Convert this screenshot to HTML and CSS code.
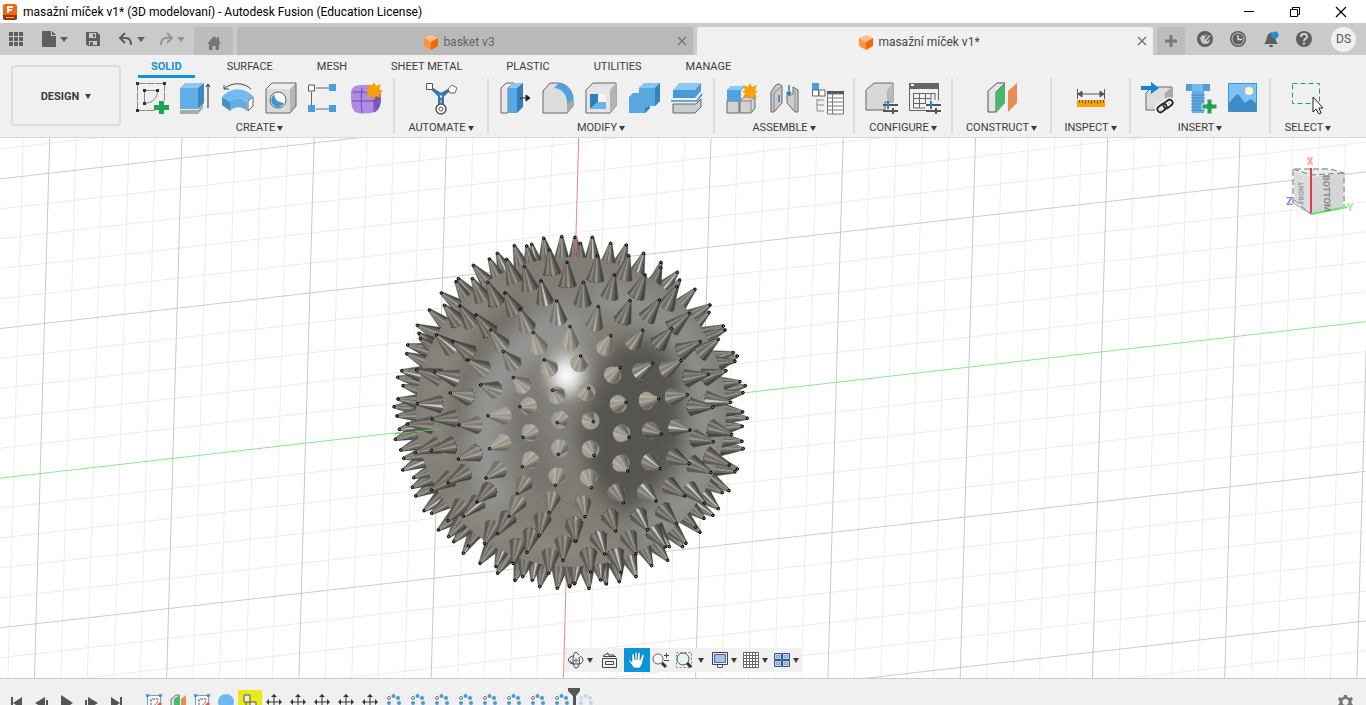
FILE: index.html
```html
<!DOCTYPE html>
<html lang="en">
<head>
<meta charset="utf-8">
<title>masažní míček v1* (3D modelovaní) - Autodesk Fusion (Education License)</title>
<link rel="stylesheet" href="styles.css">
</head>
<body>
<header class="titlebar">
  <svg class="app-logo" viewBox="0 0 16 18" aria-hidden="true"><rect x="1" y="1" width="14" height="16" rx="2" fill="#f0690f"/><path d="M1 12h14v4l-2 1H3l-2-1z" fill="#9c3606"/><path d="M6 10V4h5M6 7h4" stroke="#fff" stroke-width="2" fill="none"/><path d="M4 14.500h8" stroke="#e9b18b"/></svg>
  <h1 class="title">masažní míček v1* (3D modelovaní) - Autodesk Fusion (Education License)</h1>
  <div class="window-buttons">
    <button aria-label="Minimize"><svg viewBox="0 0 12 12"><path d="M1 5.500h10" stroke="#000"/></svg></button>
    <button aria-label="Restore"><svg viewBox="0 0 12 12"><path d="M1.500 3.500h7v7h-7zM3.500 3.500v-2h7v7h-2" fill="none" stroke="#000"/></svg></button>
    <button aria-label="Close"><svg viewBox="0 0 12 12"><path d="M1 1l10 10M11 1L1 11" stroke="#000" stroke-width="1.200"/></svg></button>
  </div>
</header>

<nav class="docbar" aria-label="Documents">
  <div class="quick">
    <button aria-label="Data panel"><svg class="i16" viewBox="0 0 16 16" fill="#5f5f5f"><path d="M1 1h4v4H1zM6 1h4v4H6zM11 1h4v4h-4zM1 6h4v4H1zM6 6h4v4H6zM11 6h4v4h-4zM1 11h4v4H1zM6 11h4v4H6zM11 11h4v4h-4z"/></svg></button>
    <button class="with-caret file" aria-label="File"><svg class="i16" viewBox="0 0 16 16"><path d="M1 0h9v5h5v11H1zM11 0l4 4h-4z" fill="#5f5f5f"/></svg><i class="caret"></i></button>
    <button class="save" aria-label="Save"><svg class="i16" viewBox="0 0 16 16"><path d="M1 1h11l3 3v11H3l-2-2z" fill="#5f5f5f"/><path d="M4 2h7v5H4zM4 10h8v4H4z" fill="#cacaca"/><path d="M8 3h2v3H8zM5 11h3v3H5z" fill="#5f5f5f"/></svg></button>
    <button class="with-caret" aria-label="Undo"><svg class="i16" viewBox="0 0 16 16"><path d="M7 2L2 7l5 5M2 7h6c4 0 5 3 5 7" fill="none" stroke="#5f5f5f" stroke-width="2"/></svg><i class="caret"></i></button>
    <button class="with-caret faint" aria-label="Redo"><svg class="i16" viewBox="0 0 16 16"><path d="M9 2l5 5-5 5M14 7H8c-4 0-5 3-5 7" fill="none" stroke="#5f5f5f" stroke-width="2"/></svg><i class="caret"></i></button>
  </div>
  <button class="home" aria-label="Home"><svg class="i16" viewBox="0 0 16 16"><path d="M8 1l3 3V2h2v4l2 3h-2v6H9.500v-4h-3v4H3V9H1z" fill="#777"/></svg></button>
  <div class="doc">
    <svg class="cube" viewBox="0 0 16 16"><path d="M8 1l7 3-7 4-7-4z" fill="#ffc08a"/><path d="M1 4l7 4v8l-7-4z" fill="#fc9440"/><path d="M15 4L8 8v8l7-4z" fill="#ee6608"/></svg>
    <a href="#basket">basket v3</a>
    <button class="close" aria-label="Close basket v3"><svg viewBox="0 0 10 10"><path d="M1 1l8 8M9 1L1 9" stroke="#777" stroke-width="1.500"/></svg></button>
  </div>
  <div class="doc active">
    <svg class="cube" viewBox="0 0 16 16"><path d="M8 1l7 3-7 4-7-4z" fill="#ffc08a"/><path d="M1 4l7 4v8l-7-4z" fill="#fc9440"/><path d="M15 4L8 8v8l7-4z" fill="#ee6608"/></svg>
    <a href="#micek">masažní míček v1*</a>
    <button class="close" aria-label="Close masažní míček"><svg viewBox="0 0 10 10"><path d="M1 1l8 8M9 1L1 9" stroke="#777" stroke-width="1.500"/></svg></button>
  </div>
  <button class="new" aria-label="New design"><svg viewBox="0 0 14 14"><path d="M7 1v12M1 7h12" stroke="#777" stroke-width="3"/></svg></button>
  <div class="account">
    <button aria-label="Extensions"><svg viewBox="0 0 18 18"><circle cx="9" cy="9" r="8" fill="#5f5f5f"/><path d="M4 8c1-2 2-3 4-3l1 2 1-3 2 2 3-1-2 3 1 1c0 3-2 5-5 5-2 0-4-1-4-3z" fill="#cacaca"/><path d="M9 9l4-5M11 11l4-4" stroke="#5f5f5f" stroke-width="1.500"/></svg></button>
    <button aria-label="Job status"><svg viewBox="0 0 18 18"><circle cx="9" cy="9" r="8" fill="#5f5f5f"/><circle cx="9" cy="9" r="6" fill="none" stroke="#cacaca"/><path d="M9 5v4.500h4" fill="none" stroke="#d8d8d8" stroke-width="1.500"/></svg></button>
    <button aria-label="Notifications"><svg viewBox="0 0 18 18"><path d="M2 14c3-2 2-9 5-10 1-2 3-2 4 0 3 1 2 8 5 10zM7 15h4c0 3-4 3-4 0z" fill="#5f5f5f"/><circle cx="13" cy="5" r="3.500" fill="#1a93d5"/></svg></button>
    <button aria-label="Help"><svg viewBox="0 0 18 18"><circle cx="9" cy="9" r="8" fill="#5f5f5f"/><path d="M6 7c0-4 6-4 6-.5 0 2.500-3 2-3 4.500M9 12.500v2" fill="none" stroke="#d8d8d8" stroke-width="2"/></svg></button>
    <button class="avatar">DS</button>
  </div>
</nav>

<section class="ribbon">
  <button class="workspace">DESIGN <i class="caret"></i></button>
  <div class="ribbon-main">
    <nav class="tabs" aria-label="Toolbar tabs">
      <a class="on" href="#solid">SOLID</a><a href="#surface">SURFACE</a><a href="#mesh">MESH</a><a href="#sheet">SHEET METAL</a><a href="#plastic">PLASTIC</a><a href="#utilities">UTILITIES</a><a href="#manage">MANAGE</a>
    </nav>
    <div class="groups">
      <div class="group create">
        <div class="tools">
          <button aria-label="Create sketch"><svg viewBox="0 0 34 34"><path d="M2.500 2.500h27v17M2.500 2.500v27h18" fill="none" stroke="#888" stroke-dasharray="8 1"/><path d="M22 9.500H9.500V23M22.500 10c0 7-5 12-13 12.500" fill="none" stroke="#888"/><path d="M1 1h3v3H1zM28 1h3v3h-3zM1 28h3v3H1zM8 8h3v3H8zM21 8h3v3h-3zM8 21h3v3H8z" fill="#333"/><path d="M24 20h5v4h5v5h-5v4h-5v-4h-5v-5h5z" fill="#22a353"/></svg></button>
          <button aria-label="Extrude"><svg viewBox="0 0 34 34"><path d="M2 29h18l5-6v4l-5 6H2z" fill="#aaa"/><path d="M2 7l5-5h19l-5 5z" fill="#8ccaf2"/><path d="M2 7h18v21H2z" fill="#63aee4"/><path d="M20 7l6-5v20l-6 6z" fill="#3d88c0"/><path d="M30 27V4M28 6l2-3 2 3" fill="none" stroke="#222"/></svg></button>
          <button aria-label="Revolve"><svg viewBox="0 0 34 34"><path d="M3 8C10 1 23 1 30 8M3 4v4h5" fill="none" stroke="#444"/><path d="M1 16c9-10 22-10 31-1l-5 6c-6-5-13-5-18 0z" fill="#74bced"/><path d="M1 16l8 5v9l-8-6z" fill="#4591c9"/><path d="M9 21c5-5 12-5 17 0v9c-5-5-12-5-17 0z" fill="#61aee3"/><path d="M27 20l5-4v9l-5 5z" fill="#fff" stroke="#666"/></svg></button>
          <button aria-label="Hole"><svg viewBox="0 0 34 34"><path d="M2 8l6-6h24l-6 6z" fill="#eee"/><path d="M26 8l6-6v23l-6 7z" fill="#b5b5b5"/><path d="M2 8h24v24H2z" fill="#d9d9d9"/><path d="M2 32V8l6-6h24v23l-6 7z" fill="none" stroke="#666"/><circle cx="14" cy="19" r="8" fill="#fff" stroke="#666"/><path d="M10 13c1 6 4 8 10 9-2 5-8 5-11 2-3-4-2-8 1-11z" fill="#4096d4"/></svg></button>
          <button aria-label="Pattern"><svg viewBox="0 0 34 34"><path d="M9 7h13M9 28h13M4.500 11v13" stroke="#666" fill="none"/><path d="M1.500 4h6v6h-6z" fill="#fff" stroke="#555"/><path d="M22 3h7v7h-7zM1 24h7v7H1zM22 24h7v7h-7z" fill="#4d9fdc"/></svg></button>
          <button aria-label="Create form"><svg viewBox="0 0 34 34"><path d="M1 13c0-7 4-9 11-9h12c5 2 7 5 7 10 0 6 0 14-6 17-7 2-14 2-20 0-4-4-4-11-4-18z" fill="#b08ce6"/><path d="M24 10l7 4c0 6 0 13-6 17z" fill="#7d58b8"/><path d="M12 7c-1 8-1 16 0 25M2 20h22l7-4M24 9v22M3 11h20" fill="none" stroke="#6c49a6"/><path d="M24 1l2 4 5-2-2 5 4 2-4 2 2 5-5-2-2 4-2-4-5 2 2-5-4-2 4-2-2-5 5 2z" fill="#f8a100"/></svg></button>
        </div>
        <button class="menu">CREATE <i class="caret"></i></button>
      </div>
      <div class="group automate">
        <div class="tools"><button aria-label="Automated modeling"><svg viewBox="0 0 34 34"><path d="M6 6l9 9v10h4V15l9-8-11 6z" fill="#6aaee0" stroke="#3577ad" stroke-width="2"/><path d="M15 14h4l-2 5z" fill="#fff" stroke="#3577ad"/><path d="M2.500 2.500h6v6h-6z" fill="#fff" stroke="#555"/><path d="M28 4l5 3-2 5h-5l-2-4z" fill="#fff" stroke="#666"/><circle cx="17" cy="28" r="5" fill="#fff" stroke="#555" stroke-width="1.500"/><circle cx="17" cy="28" r="2" fill="none" stroke="#555"/></svg></button></div>
        <button class="menu">AUTOMATE <i class="caret"></i></button>
      </div>
      <div class="group modify">
        <div class="tools">
          <button aria-label="Press pull"><svg viewBox="0 0 34 34"><path d="M3 7l5-5h8L10 7v25H3z" fill="#e8e8e8" stroke="#666"/><path d="M10 7l5-5h10l-5 5z" fill="#8ccaf2"/><path d="M10 7h9v25h-9z" fill="#58a8e2"/><path d="M19 7l6-5v24l-6 6z" fill="#357fb7"/><path d="M22 17h9M28 14l4 3-4 3z" stroke="#222" fill="#222"/></svg></button>
          <button aria-label="Fillet"><svg viewBox="0 0 34 34"><path d="M2 32V10l7-8h7c10 0 16 8 16 17v6l-6 7z" fill="#ddd" stroke="#666"/><path d="M26 21l6-2v6l-6 7z" fill="#aaa"/><path d="M13 7l5-5c9 1 14 8 14 17l-6 3C26 14 22 8 13 7z" fill="#4fa3df"/></svg></button>
          <button aria-label="Shell"><svg viewBox="0 0 34 34"><path d="M2 9l7-7h23v23l-6 7H2z" fill="#e5e5e5" stroke="#666"/><path d="M26 9l6-7v23l-6 7z" fill="#b3b3b3"/><path d="M6 13h16v15H6z" fill="#fff"/><path d="M6 13h8v8l-8 7z" fill="#2d7fbd"/><path d="M6 28l8-7h8v7z" fill="#67b3e8"/><path d="M14 13h8v8h-8z" fill="#f4f4f4"/></svg></button>
          <button aria-label="Combine"><svg viewBox="0 0 34 34"><path d="M2 16l4-4h6V7l5-5h16v18l-5 5h-5v2l-5 5H2z" fill="#58a7e0"/><path d="M12 7l5-5h16l-5 5z" fill="#84c5f1"/><path d="M28 7l5-5v18l-5 5zM18 27v5l5-5v-2z" fill="#3682bc"/></svg></button>
          <button aria-label="Split body"><svg viewBox="0 0 34 34"><path d="M3 9l6-7h22l-5 7z" fill="#8ccaf2"/><path d="M3 9h22v8H3zM25 9l6-7v8l-6 7z" fill="#4b9ad5"/><path d="M1 20h26l5-7" fill="none" stroke="#3990d0" stroke-width="1.500"/><path d="M3 23h23l5-5v8l-6 6H3z" fill="#ccc" stroke="#666"/></svg></button>
        </div>
        <button class="menu">MODIFY <i class="caret"></i></button>
      </div>
      <div class="group assemble">
        <div class="tools">
          <button aria-label="New component"><svg viewBox="0 0 34 34"><path d="M3 20h12v12H3zM16 20l4-4h11v11l-4 5H16z" fill="#d2d2d2" stroke="#666"/><path d="M3 9l4-4h14l-4 5v10H3z" fill="#4fa2df"/><path d="M3 9l4-4h14l-4 4z" fill="#8ac9f2"/><path d="M16 20h11v12M27 20l4-4" stroke="#888" fill="none"/><path d="M26 2l2 4 5-2-2 5 3 2-3 1 2 5-5-2-2 4-2-4-5 2 2-5-3-1 3-2-2-5 5 2z" fill="#f8a100"/></svg></button>
          <button aria-label="Joint"><svg viewBox="0 0 34 34"><path d="M4 11l4-6c2-3 7-2 7 1v16l-8 9H4z" fill="#c9c9c9" stroke="#666"/><path d="M7 31V12l8-7" fill="none" stroke="#888"/><path d="M31 9l-5-3v7c-2 2-5 1-6-1v10l8 9h3z" fill="#ccc" stroke="#666"/><path d="M28 9v21" stroke="#888"/><path d="M22 4v10M20 11l2 3 2-3M12 14v7" fill="none" stroke="#287db8" stroke-width="1.500"/></svg></button>
          <button aria-label="Bill of materials"><svg viewBox="0 0 34 34"><path d="M2 2h7v7H2z" fill="#4b9fdd"/><path d="M2.500 9h6v6h-6zM9 9h6v6H9z" fill="#fff" stroke="#666"/><path d="M7 18v12h7M7 19h7M7 24h7" stroke="#888" fill="none"/><path d="M17 10h17v4H17z" fill="#555"/><path d="M17.500 13h16v20h-16z" fill="#fff"/><path d="M17.500 13h16v20h-16zM17 17h17M17 21h17M17 25h17M17 29h17M22.500 13v20" fill="none" stroke="#777"/></svg></button>
        </div>
        <button class="menu">ASSEMBLE <i class="caret"></i></button>
      </div>
      <div class="group configure">
        <div class="tools">
          <button aria-label="Configure part"><svg viewBox="0 0 34 34"><path d="M1 9l8-7h19v19H20v8H1z" fill="#d8d8d8" stroke="#666"/><path d="M22 9l6-7v19h-6z" fill="#b9b9b9"/><path d="M18 24h15M18 30h15" stroke="#555" stroke-width="2"/><path d="M23 20v8" stroke="#2382c5" stroke-width="2"/><path d="M28 27v6" stroke="#555" stroke-width="2"/></svg></button>
          <button aria-label="Configuration table"><svg viewBox="0 0 34 34"><path d="M1 2h30v6H1z" fill="#666"/><path d="M1.500 2.500h29v17M1.500 2.500v27h17M5 12.500h22M5 17.500h18M5 22.500h12M5 27h12M5.500 12v15M11.500 12v15M17.500 12v11M23 12v7M27 12v7" fill="none" stroke="#666"/><path d="M18 24h15M18 30h15" stroke="#555" stroke-width="2"/><path d="M23 20v8" stroke="#2382c5" stroke-width="2"/><path d="M28 27v6" stroke="#555" stroke-width="2"/><path d="M3 4h3" stroke="#fff" stroke-width="2"/></svg></button>
        </div>
        <button class="menu">CONFIGURE <i class="caret"></i></button>
      </div>
      <div class="group construct">
        <div class="tools"><button aria-label="Offset plane"><svg viewBox="0 0 34 34"><path d="M3 10l9-8h8l-9 9v20H3z" fill="#e4e4e4" stroke="#555"/><path d="M11 11l9-9v20l-9 10z" fill="#4ab86c"/><path d="M23 10l9-8v20l-9 9z" fill="#e58b55"/></svg></button></div>
        <button class="menu">CONSTRUCT <i class="caret"></i></button>
      </div>
      <div class="group inspect">
        <div class="tools"><button aria-label="Measure"><svg viewBox="0 0 34 34"><path d="M3.500 8v10M30.500 8v10M4 13h26M8 10l-4 3 4 3zM26 10l4 3-4 3z" fill="#555" stroke="#555"/><path d="M3 19h28v7H3z" fill="#f7a400"/><path d="M5.500 19v3M8.500 19v3M11.500 19v4M14.500 19v3M17.500 19v4M20.500 19v3M23.500 19v4M26.500 19v3M29.500 19v3" stroke="#805500"/></svg></button></div>
        <button class="menu">INSPECT <i class="caret"></i></button>
      </div>
      <div class="group insert">
        <div class="tools">
          <button aria-label="Insert derive"><svg viewBox="0 0 34 34"><path d="M6 12l6-6h20v17l-7 6H6z" fill="#ddd" stroke="#666"/><path d="M25 12l7-6v17l-7 6z" fill="#aaa"/><path d="M1 5h10V1l8 6-8 6V9H1z" fill="#1684d2"/><g fill="none" stroke="#fff" stroke-width="5"><rect x="17" y="24" width="10" height="6" rx="3" transform="rotate(-38 22 27)"/><rect x="23" y="20" width="10" height="6" rx="3" transform="rotate(-38 28 23)"/></g><g fill="none" stroke="#333" stroke-width="2"><rect x="17" y="24" width="10" height="6" rx="3" transform="rotate(-38 22 27)"/><rect x="23" y="20" width="10" height="6" rx="3" transform="rotate(-38 28 23)"/></g></svg></button>
          <button aria-label="Insert fastener"><svg viewBox="0 0 34 34"><path d="M3 3h24v7H3z" fill="#4f9fd8"/><path d="M9 3h11v7H9z" fill="#78bbea"/><path d="M9 10h12v22H9z" fill="#69aee0"/><path d="M8 14h14M8 17h14M8 20h14M8 23h14M8 26h14M8 29h14" stroke="#3e88be"/><path d="M24 18h5v5h5v5h-5v5h-5v-5h-5v-5h5z" fill="#22a353" stroke="#f0f0f0"/></svg></button>
          <button aria-label="Insert image"><svg viewBox="0 0 34 34"><path d="M2 2h29v29H2z" fill="#7ec2f4"/><circle cx="23" cy="10" r="4" fill="#fff9cd"/><path d="M2 23l8-9c1-1 2-1 3 0l6 8 4-3c1-1 2-1 3 0l5 4v8H2z" fill="#3b8cc7"/><path d="M2.500 2.500h28v28h-28z" fill="none" stroke="#4492ca"/></svg></button>
        </div>
        <button class="menu">INSERT <i class="caret"></i></button>
      </div>
      <div class="group select">
        <div class="tools"><button aria-label="Select"><svg viewBox="0 0 34 34"><path d="M1.500 2.500h27v20h-27z" fill="none" stroke="#22a353" stroke-dasharray="5 3"/><path d="M22 16v15l3-3 3 5 2-1-2-5h4z" fill="#fff" stroke="#222"/></svg></button></div>
        <button class="menu">SELECT <i class="caret"></i></button>
      </div>
    </div>
  </div>
</section>

<main class="viewport">
  <svg id="scene" class="scene" viewBox="0 138 1366 540" preserveAspectRatio="xMidYMid slice" role="img" aria-label="Spiked massage ball on a grid">
    <defs>
      <clipPath id="body"><circle cx="571" cy="412" r="155"/></clipPath>
      <filter id="soft" x="-50%" y="-50%" width="200%" height="200%"><feGaussianBlur stdDeviation="10"/></filter>
      <filter id="glow" x="-50%" y="-50%" width="200%" height="200%"><feGaussianBlur stdDeviation="7"/></filter>
    </defs>
    <g id="grid"></g>
    <g id="back"></g>
    <g clip-path="url(#body)">
      <circle cx="571" cy="412" r="156" fill="#807d76"/>
      <g filter="url(#soft)">
        <path d="M440 470Q420 350 500 285" fill="none" stroke="#8b877e" stroke-width="20"/>
        <path d="M460 440Q448 370 520 305" fill="none" stroke="#6b685f" stroke-width="14"/>
        <path d="M500 510C470 430 478 370 560 320" fill="none" stroke="#959696" stroke-width="30"/>
        <path d="M590 300C660 290 700 350 705 420C706 480 680 520 640 540" fill="none" stroke="#8d918c" stroke-width="32"/>
        <path d="M610 350Q655 320 684 368V450Q665 490 625 515Q590 500 578 430Z" fill="#575550"/>
        <path d="M520 400Q528 450 550 490" fill="none" stroke="#6d6c68" stroke-width="16"/>
        <path d="M552 400Q556 440 566 465" fill="none" stroke="#828280" stroke-width="14"/>
        <ellipse cx="565" cy="335" rx="24" ry="32" fill="#929391"/>
        <path d="M450 500Q520 560 620 548" fill="none" stroke="#8f8b80" stroke-width="16"/>
      </g>
      <g filter="url(#glow)"><ellipse cx="566" cy="374" rx="20" ry="26" fill="#b4b4b4"/><circle cx="567" cy="375" r="13" fill="#fff"/></g>
    </g>
    <path d="M577 236L575 262" stroke="#d66" fill="none"/>
    <g id="front"></g>
    <path d="M394 434L440 429" stroke="#66bf5e" fill="none"/>
  </svg>

  <svg class="viewcube" viewBox="0 0 72 66" role="img" aria-label="View cube">
    <path d="M10 17l18 6v38L10 46z" fill="#dcdcdc"/><path d="M28 21l32-2-1 36-31 6z" fill="#d4d5d6"/><path d="M10 17l29-3 21 5-32 4z" fill="#ececec"/>
    <path d="M9 49V15h37l14 4v33M9 15l18 6 33-2M10 46l18 15" fill="none" stroke="#777" stroke-dasharray="6 3"/>
    <path d="M27 14v46" stroke="#e33c3c" stroke-width="2"/><path d="M27 60l36-7" stroke="#62ec62" stroke-width="2"/><path d="M27 60L8 48" stroke="#8887e8"/>
    <text x="23" y="11" fill="#f99" font-size="10">X</text><text x="2" y="51" fill="#8b85ee" font-size="11">Z</text><text x="63" y="57" fill="#8eed8e" font-size="10">Y</text>
    <text transform="translate(39 21) rotate(88)" font-size="9" fill="#888">BOTTOM</text><text transform="translate(20 50) rotate(-92)" font-size="7" fill="#999">FRONT</text>
  </svg>

  <div class="navbar">
    <button class="wide" aria-label="Orbit"><svg viewBox="0 0 18 18"><path d="M6 5C0 6 0 12 6 13l6 0c5-1 5-6 1-8M9 1C5 1 5 17 9 17c3 0 4-5 3-11M9 1l3 3M6 13l-3-3" fill="none" stroke="#444"/><path d="M9 7v5M6.500 9.500h5" stroke="#1688cd"/></svg><i class="caret"></i></button>
    <button class="look" aria-label="Look at"><svg viewBox="0 0 18 18"><path d="M1.500 7.500h14v9h-14zM4.500 10.500h8v3h-8zM2 5.500h13M2 5l5-3v2h6v2" fill="none" stroke="#444"/></svg></button>
    <button class="pan" aria-label="Pan"><svg viewBox="0 0 18 18"><path d="M6 17L1 10c0-1 1-2 3 1L4 4c0-2 2-1 2 0l1 5V2c0-1 2-1 2 0v7l1-7c1-1 2-1 2 0v7l2-5c1-1 2 0 2 1l-2 8-2 4z" fill="#fff" stroke="#155b82" stroke-width=".5"/></svg></button>
    <button class="look" aria-label="Zoom"><svg viewBox="0 0 18 18"><circle cx="6" cy="8" r="5" fill="#f8f8f8" stroke="#666"/><path d="M10 12l4 4" stroke="#333" stroke-width="3"/><path d="M12 4.500h5M14.500 2v5M12 9.500h5" stroke="#444"/></svg></button>
    <button class="wide fit" aria-label="Fit"><svg viewBox="0 0 18 18"><path d="M1.500 1.500h15v15h-15z" fill="none" stroke="#777" stroke-dasharray="2 2"/><circle cx="8" cy="8" r="6" fill="#e5f4f4" stroke="#555"/><path d="M12 12l4 4" stroke="#333" stroke-width="3"/></svg><i class="caret"></i></button>
    <button class="wide" aria-label="Display settings"><svg viewBox="0 0 18 18"><path d="M1.500 1.500h15v12h-15z" fill="#eee" stroke="#444"/><path d="M3.500 3.500h11v8h-11z" fill="#a9c1ea" stroke="#4d6998"/><path d="M6.500 14v2.500h5V14" fill="none" stroke="#555"/></svg><i class="caret"></i></button>
    <button class="wide" aria-label="Grid settings"><svg viewBox="0 0 18 18"><path d="M1.500 1.500h15v15h-15zM4.500 1v16M7.500 1v16M10.500 1v16M13.500 1v16M1 4.500h16M1 7.500h16M1 10.500h16M1 13.500h16" fill="#fff" stroke="#666"/></svg><i class="caret"></i></button>
    <button class="wide" aria-label="Viewports"><svg viewBox="0 0 18 18"><path d="M1.500 2.500h7v6h-7zM9.500 2.500h7v6h-7zM1.500 9.500h7v6h-7zM9.500 9.500h7v6h-7z" fill="#b9d0f2" stroke="#3a5480"/><path d="M3.500 4.500h3v2h-3zM11.500 4.500h3v2h-3zM3.500 11.500h3v2h-3zM11.500 11.500h3v2h-3z" fill="none" stroke="#86a4d4"/></svg><i class="caret"></i></button>
  </div>
</main>

<footer class="timeline">
  <div class="playback">
    <button aria-label="Go to start"><svg viewBox="0 0 16 16"><path d="M3 3h2v12H3zM14 3v12L5 9z" fill="#555"/></svg></button>
    <button aria-label="Step back"><svg viewBox="0 0 16 16"><path d="M12 3v12L2 9zM13 6h2v9h-2z" fill="#555"/></svg></button>
    <button aria-label="Play"><svg viewBox="0 0 16 16"><path d="M3 1l12 8-12 8z" fill="#555"/></svg></button>
    <button aria-label="Step forward"><svg viewBox="0 0 16 16"><path d="M5 3v12l10-6zM2 6h2v9H2z" fill="#555"/></svg></button>
    <button aria-label="Go to end"><svg viewBox="0 0 16 16"><path d="M12 3h2v12h-2zM3 3v12l9-6z" fill="#555"/></svg></button>
  </div>
  <div id="features" class="features"></div>
  <button class="settings" aria-label="Timeline settings"><svg viewBox="0 0 16 16"><path d="M7 1h3l.5 2 2 1 2-1 1.500 2-1.500 2v2l1.500 2-1.500 2-2-1-2 1-.5 2H7l-.5-2-2-1-2 1L1 11l1.500-2V7L1 5l1.500-2 2 1 2-1z" fill="#777"/><circle cx="8.500" cy="8" r="3" fill="#f0f0f0"/></svg></button>
</footer>
<script src="scene.js"></script>
</body>
</html>
```
FILE: styles.css
```css
* { box-sizing: border-box; }
body { margin: 0; height: 100vh; display: flex; flex-direction: column; overflow: hidden; background: #f0f0f0; color: #3c3c3c; font: 11px/14px Roboto, "Noto Sans", sans-serif; }
button { margin: 0; padding: 0; border: 0; background: none; color: inherit; font: inherit; display: flex; align-items: center; justify-content: center; }
a { color: inherit; text-decoration: none; }
svg { display: block; flex: none; }
.caret { display: inline-block; flex: none; border: 3px solid transparent; border-top: 5px solid #3c3c3c; border-bottom: 0; }

.titlebar { flex: none; height: 23px; display: flex; align-items: center; background: #fff; color: #000; padding-left: 2px; }
.app-logo { width: 16px; height: 18px; margin-right: 5px; }
.title { flex: 1; margin: 0; font: 12px/16px Roboto, "Noto Sans", sans-serif; }
.window-buttons { display: flex; padding-right: 2px; }
.window-buttons button { width: 46px; height: 20px; }
.window-buttons svg { width: 12px; height: 12px; }

.docbar { flex: none; height: 32px; display: flex; align-items: flex-end; gap: 4px; background: #cacaca; }
.quick { width: 190px; height: 32px; display: flex; align-items: center; padding-left: 8px; gap: 17px; }
.quick .caret { border-top-color: #5f5f5f; border-left-width: 4px; border-right-width: 4px; }
.i16 { width: 16px; height: 16px; }
.with-caret { gap: 3px; }
.quick .with-caret + .with-caret { margin-left: -4px; }
.faint { opacity: .5; }
.home { width: 39px; height: 28px; padding-top: 4px; background: #bcbcbc; border-radius: 3px 3px 0 0; }
.doc { flex: 1; height: 28px; display: flex; align-items: center; justify-content: center; gap: 4px; position: relative; padding: 2px 12px 0 0; background: #b9b9b9; color: #666; border-radius: 3px 3px 0 0; font-size: 12px; }
.doc.active { background: #f0f0f0; color: #444; }
.cube { width: 16px; height: 16px; }
.close { position: absolute; right: 6px; top: 9px; }
.close svg { width: 10px; height: 10px; }
.new { width: 28px; height: 28px; background: #bcbcbc; border-radius: 3px 3px 0 0; }
.new svg { width: 14px; height: 14px; }
.account { height: 32px; display: flex; align-items: center; gap: 15px; padding: 0 10px 0 7px; }
.account svg { width: 18px; height: 18px; }
.avatar { width: 25px; height: 25px; margin-left: 3px; border-radius: 50%; background: #f0f0f0; font-size: 12px; color: #555; }

.ribbon { flex: none; height: 83px; display: flex; background: #f0f0f0; border-bottom: 1px solid #d8d8d8; }
.workspace { width: 110px; height: 61px; margin: 10px 5px 0 11px; padding-top: 2px; gap: 6px; border: 2px solid #dcdcdc; border-radius: 4px; font-weight: 700; }
.ribbon-main { flex: 1; min-width: 0; }
.tabs { display: flex; gap: 18px; height: 23px; padding-left: 12px; }
.tabs a { padding: 5px 13px 1px; border-bottom: 3px solid transparent; white-space: nowrap; }
.tabs .on { color: #1592d2; border-color: #1592d2; font-weight: 700; margin-right: 1px; }
.groups { display: flex; }
.group { display: flex; flex-direction: column; align-items: center; height: 56px; padding-top: 3px; border-right: 2px solid #dcdcdc; }
.tools { display: flex; gap: 9px; }
.tools svg { width: 34px; height: 34px; }
.menu { gap: 2px; height: 14px; margin-top: 6px; white-space: nowrap; }
.create { width: 269px; }
.automate { width: 94px; }
.modify { width: 226px; }
.assemble { width: 140px; }
.configure { width: 98px; }
.construct { width: 99px; }
.inspect { width: 79px; }
.insert { width: 140px; }
.select { width: 74px; border-right: 0; }

.viewport { flex: 1; min-height: 0; position: relative; background: #fff; }
.scene { width: 100%; height: 100%; }
.viewcube { position: absolute; right: 10px; top: 16px; width: 72px; height: 66px; font-family: Roboto, sans-serif; font-weight: 700; }
.navbar { position: absolute; bottom: 6px; left: 0; right: 0; width: 236px; height: 24px; margin: 0 auto; display: flex; background: #f0f0f0; }
.navbar button { height: 24px; }
.navbar svg { width: 18px; height: 18px; }
.wide { width: 31px; gap: 2px; }
.fit { width: 37px; gap: 5px; }
.look { width: 22px; }
.navbar .look:nth-child(2) { width: 28px; }
.pan { width: 26px; background: #0a96d8; }

.timeline { flex: none; height: 27px; display: flex; align-items: flex-start; padding-top: 15px; overflow: hidden; border-top: 1px solid #ccc; }
.timeline svg { width: 16px; height: 16px; }
.playback { display: flex; gap: 9px; padding-left: 8px; width: 142px; }
.features { display: flex; flex: 1; }
.features button { width: 24px; height: 24px; margin-top: -4px; }
.features .hot { background: #e6ea18; }
.features .marker { width: 12px; margin: -6px -6px 0; z-index: 1; }
.features .marker svg { width: 12px; height: 24px; }
.features .later { opacity: .3; }
.settings { margin-right: 13px; }
```
FILE: scene.js
```js
const NS = 'http://www.w3.org/2000/svg';
function add(parent, tag, attrs) {
  const el = document.createElementNS(NS, tag);
  for (const k in attrs) el.setAttribute(k, attrs[k]);
  parent.appendChild(el);
  return el;
}

// Ground grid: every fifth line is a major one.
const grid = document.getElementById('grid');
function gridLine(x1, y1, x2, y2, color) {
  add(grid, 'path', { d: `M${x1} ${y1}L${x2} ${y2}`, stroke: color, fill: 'none' });
}
for (const major of [false, true]) {
  for (let i = -10; i < 60; i++) {
    if ((i % 5 === 0) !== major) continue;
    const x = 49.7 + 26.45 * i;
    gridLine(x, 138, x - 15.3, 678, i === 20 ? '#e98787' : major ? '#c9c9c9' : '#ededed');
  }
  for (let i = -6; i < 24; i++) {
    if ((i % 5 === 0) !== major) continue;
    const y = 178.9 + 29.93 * i;
    gridLine(0, y, 1366, y - 156.6, i === 10 ? '#8ee58e' : major ? '#cccccc' : '#ececec');
  }
}

// Spikes per quadrant: tip x, tip y, base x, base y, at three units per pixel.
const quadrants = [
  [380, 220, `491,55,500,115 545,50,545,120 585,52,590,110 403,77,425,140 440,78,455,140 455,73,470,142 508,90,517,160 352,100,375,150 328,117,358,180 380,118,405,185 433,140,450,207 561,127,563,197 483,183,495,245 530,243,535,300 280,136,325,190 277,176,310,238 323,187,350,248 375,219,405,275 228,185,265,248 235,176,278,232 184,219,245,265 193,256,235,305 240,258,275,310 288,285,330,335 420,269,442,322 148,270,205,320 112,316,180,345 117,340,150,370 121,356,175,395 169,345,215,385 219,365,270,400 332,330,365,375 460,338,478,383 570,320,571,370 83,375,150,392 80,401,148,430 264,420,312,448 370,395,400,432 493,420,508,445 65,452,120,462 110,450,180,472 164,457,230,475 53,472,130,485 69,497,142,515 302,495,345,510 400,473,430,495 518,511,530,525 211,519,265,530 54,537,120,545 42,560,110,562 112,551,180,552 420,560,445,558`],
  [560, 220, `61,70,62,140 97,52,97,118 112,108,106,180 152,70,143,135 199,75,180,135 206,107,190,175 251,100,230,160 163,165,148,232 70,187,68,250 255,165,228,228 303,127,280,205 302,143,270,205 352,157,310,205 359,180,325,230 350,200,318,260 405,208,350,265 115,260,103,318 210,242,188,300 298,240,260,295 450,255,395,290 388,280,335,325 447,277,390,330 152,347,135,385 248,331,220,370 335,326,295,372 490,318,425,345 495,330,420,360 421,365,362,395 475,358,420,400 62,408,58,430 180,443,158,465 277,430,240,455 363,422,318,450 520,398,452,415 532,408,470,435 525,424,455,430 445,463,380,475 498,452,435,472 540,485,470,492 556,497,480,512 549,518,480,528 86,505,80,517 198,547,175,552 296,537,260,542 382,524,335,532 512,547,440,540 458,562,395,560`],
  [380, 400, `51,48,120,42 58,88,120,75 82,72,155,75 157,58,225,55 237,75,290,75 324,47,375,48 532,68,540,60 46,118,110,95 62,150,130,125 106,158,175,135 154,151,218,135 71,175,140,160 68,210,130,180 429,112,450,98 329,146,372,128 235,177,290,158 535,163,540,145 427,200,452,180 318,234,358,208 101,233,168,205 97,262,150,235 107,288,165,255 154,270,212,235 204,248,258,215 526,256,532,228 412,281,432,250 291,306,328,270 132,332,180,295 155,340,210,300 250,349,295,305 204,362,245,315 388,349,415,305 508,338,515,295 175,390,225,350 353,401,385,352 478,406,488,355 206,410,240,370 221,425,265,378 250,460,290,390 265,438,300,385 314,431,340,378 441,457,455,400 586,424,583,370 549,481,550,422 300,490,335,440 348,500,370,440 353,520,380,470 399,490,415,430 405,541,425,485 428,530,435,485 457,541,465,480 479,560,490,505 506,520,512,460 532,565,538,505 569,560,578,490 583,550,590,490`],
  [560, 400, `100,65,92,62 207,112,185,100 304,102,270,92 390,90,345,82 460,125,405,115 515,103,455,85 548,36,480,30 562,55,490,48 547,79,490,82 546,124,480,120 550,146,485,143 102,166,92,148 203,213,183,190 300,206,268,185 387,191,340,170 453,217,395,190 508,195,440,165 532,207,455,180 525,215,465,205 94,263,86,232 190,308,168,275 288,303,255,272 374,288,325,255 433,309,385,265 487,278,430,245 507,272,440,230 475,326,435,290 459,346,400,310 432,355,390,320 75,350,68,310 167,393,150,350 262,389,235,345 349,371,308,330 420,397,365,345 407,382,360,335 378,430,335,385 368,440,325,390 316,441,280,395 328,440,285,385 47,423,42,378 134,462,115,412 228,461,205,408 323,481,285,435 275,497,250,440 228,530,208,475 92,516,85,460 183,517,165,460 44,551,40,490 28,558,30,500 87,565,80,505 139,552,125,495 122,540,115,490 178,545,170,495`]
];
const spikes = [];
for (const [ox, oy, list] of quadrants) {
  for (const item of list.split(' ')) {
    const [a, b, c, d] = item.split(',').map(Number);
    const s = { tx: ox + a / 3, ty: oy + b / 3, bx: ox + c / 3, by: oy + d / 3 };
    s.r = Math.hypot(s.tx - 571, s.ty - 413);
    spikes.push(s);
  }
}
spikes.sort((p, q) => q.r - p.r);

const tones = {
  outer: ['#5c5a54', '#85837c', '#6d6b64', '#94928b', '#66645e', '#474641'],
  middle: ['#75736b', '#96948c', '#7f7d75', '#a5a39b', '#716f68', '#504e49'],
  inner: ['#a5a297', '#b3b0a5', '#9a978d', '#a8a59a', '#86837a', '#6c6a62']
};
spikes.forEach((s, n) => {
  const layer = document.getElementById(s.r > 168 ? 'back' : 'front');
  const dx = s.tx - s.bx, dy = s.ty - s.by, len = Math.hypot(dx, dy) || 1;
  const ux = dx / len, uy = dy / len, vx = -uy, vy = ux;
  const w = s.r > 168 ? 8 : 9;
  const depth = w * Math.sqrt(Math.max(0.05, 1 - (len / 24) ** 2));
  const at = t => [s.bx + vx * w * t - ux * depth * Math.sqrt(1 - t * t), s.by + vy * w * t - uy * depth * Math.sqrt(1 - t * t)];
  const set = (s.r > 125 ? tones.outer : s.r > 90 ? tones.middle : tones.inner).slice();
  if (s.r > 90 && n % 5 === 0) set[3] = '#c9c8c4';
  const flip = vx + vy * 0.3 < 0;
  const angle = Math.atan2(vy, vx) * 180 / Math.PI;
  add(layer, 'ellipse', { cx: s.bx, cy: s.by, rx: w, ry: depth, transform: `rotate(${angle} ${s.bx} ${s.by})`, fill: set[2] });
  const cuts = [-1, -0.72, -0.4, -0.05, 0.3, 0.66, 1];
  for (let i = 0; i < 6; i++) {
    const p = at(cuts[i]), q = at(cuts[i + 1]), tint = set[flip ? 5 - i : i];
    const t1 = cuts[i] * 1.5, t2 = cuts[i + 1] * 1.5;
    add(layer, 'path', { d: `M${s.tx + vx * t1} ${s.ty + vy * t1}L${p}L${q}L${s.tx + vx * t2} ${s.ty + vy * t2}Z`, fill: tint, stroke: tint, 'stroke-width': 0.3 });
  }
  if (s.r > 120 && n % 2) {
    const pts = [-1, -0.8, -0.4, 0, 0.4, 0.8, 1].map(at).join('L');
    add(layer, 'path', { d: 'M' + pts, fill: 'none', stroke: '#222', 'stroke-dasharray': '1 3' });
  }
  add(layer, 'circle', { cx: s.tx, cy: s.ty, r: 1.3, fill: '#77756f', stroke: '#000', 'stroke-width': 1 });
});

// Timeline features.
const art = {
  sketch: '<path d="M1.500 1.500h13v13h-13z" fill="#f8f8f8" stroke="#6f9fc8"/><path d="M5 12V5h7c0 4-3 7-7 7" fill="none" stroke="#666" stroke-dasharray="3 1"/><path d="M0 0h3v3H0zM13 0h3v3h-3z" fill="#4b9bda"/><path d="M10 12l4-4 2 2-4 5z" fill="#d95c50"/>',
  plane: '<path d="M1 5l5-4h3v10l-5 5H1z" fill="#ddd" stroke="#777"/><path d="M4 5l6-4v11l-6 4z" fill="#4ab86c"/><path d="M11 5l5-4v11l-5 4z" fill="#e58b55"/>',
  sphere: '<circle cx="8" cy="8" r="8" fill="#6db9f0"/>',
  component: '<path d="M2 1h6v7H2zM8 8h6v7H8z" fill="#eee" stroke="#555"/><path d="M4 8v4h4" fill="none" stroke="#555"/>',
  move: '<path d="M8 0l3 3H8.500v4.500H13V5l3 3-3 3V8.500H8.500V13H11l-3 3-3-3h2.500V8.500H3V11L0 8l3-3v2.500h4.500V3H5z" fill="#333"/>',
  pattern: '<circle cx="3" cy="4" r="1.500" fill="none" stroke="#777"/><g fill="#4b9bda"><circle cx="7.500" cy="2" r="2"/><circle cx="12" cy="4" r="2"/><circle cx="13" cy="9" r="2"/><circle cx="3" cy="9" r="2"/><circle cx="4" cy="14" r="2"/><circle cx="12" cy="14" r="2"/></g>'
};
art.marker = '<path d="M0 0h12v3L8 8v16H5V8L0 3z" fill="#555"/>';
const features = document.getElementById('features');
function feature(name, cls, box) {
  features.insertAdjacentHTML('beforeend', `<button class="${cls}" aria-label="${name}"><svg viewBox="${box || '0 0 16 16'}">${art[name]}</svg></button>`);
}
['sketch', 'plane', 'sketch', 'sphere'].forEach(n => feature(n, ''));
feature('component', 'hot');
for (let i = 0; i < 5; i++) feature('move', '');
for (let i = 0; i < 8; i++) feature('pattern', '');
feature('marker', 'marker', '0 0 12 24');
feature('pattern', 'later');
```
